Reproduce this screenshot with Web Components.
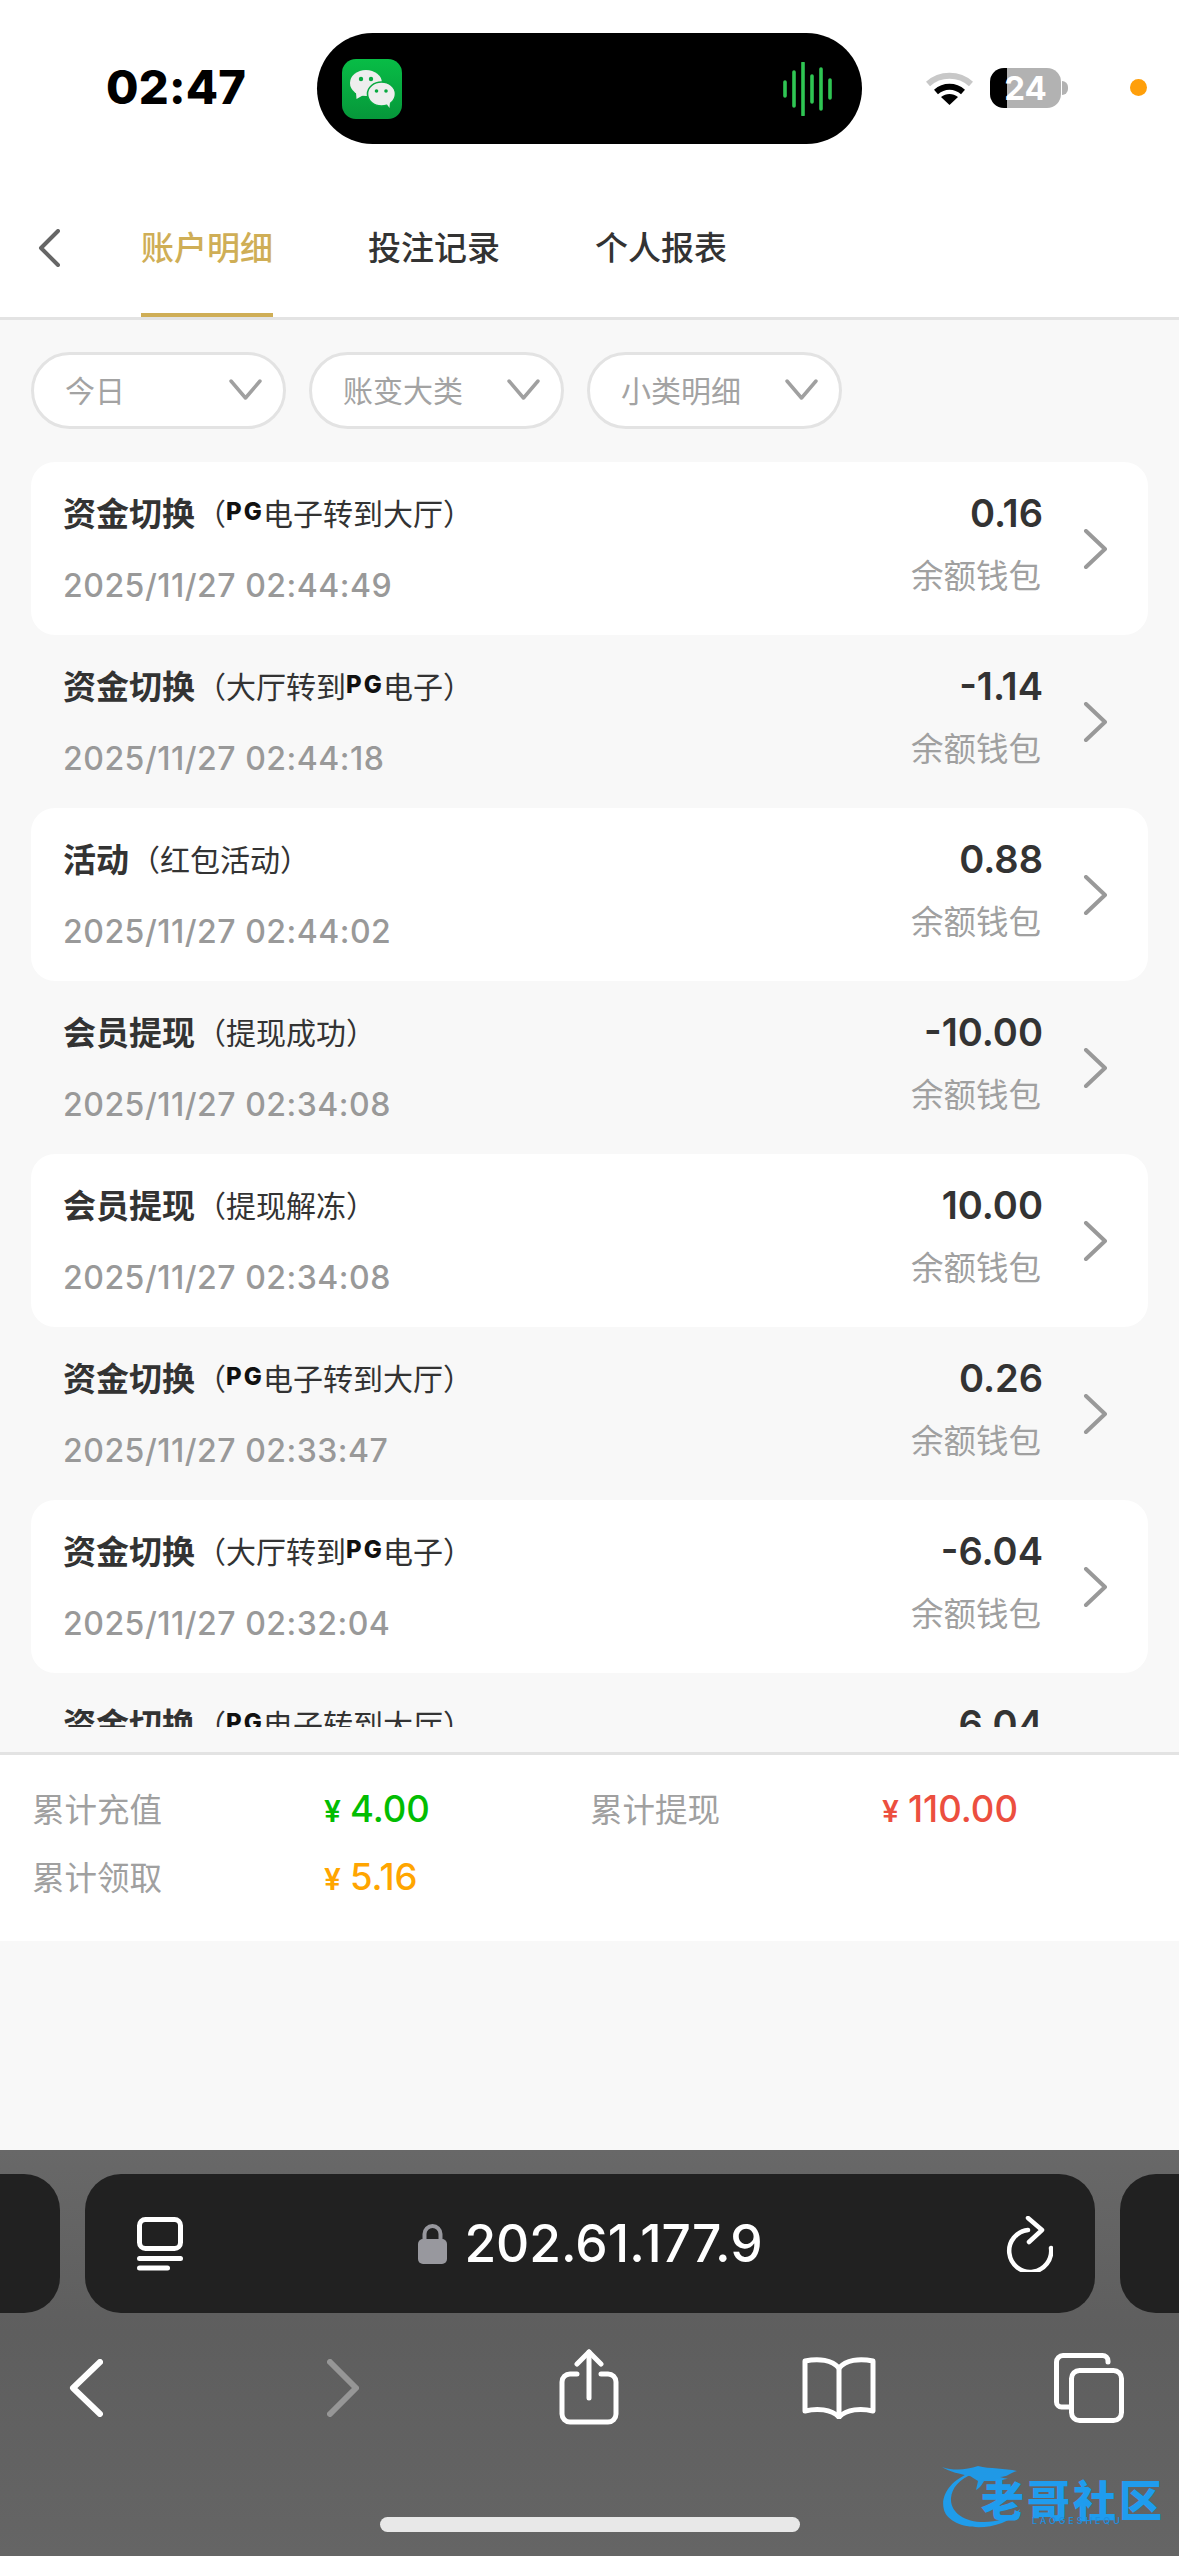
<!DOCTYPE html>
<html lang="zh">
<head>
<meta charset="utf-8">
<title>账户明细</title>
<style>
  html, body { margin: 0; padding: 0; }
  body {
    width: 1179px;
    height: 2556px;
    overflow: hidden;
    background: #f8f8f8;
    font-family: Inter, "Noto Sans CJK SC", sans-serif;
    color: #333;
  }
  #page { display: flex; flex-direction: column; height: 2556px; }
</style>
</head>
<body>
<div id="page">
  <status-bar time="02:47" battery="24"></status-bar>
  <tab-nav>
    <tab-item active>账户明细</tab-item>
    <tab-item>投注记录</tab-item>
    <tab-item>个人报表</tab-item>
  </tab-nav>
  <filter-bar>
    <filter-pill>今日</filter-pill>
    <filter-pill>账变大类</filter-pill>
    <filter-pill>小类明细</filter-pill>
  </filter-bar>
  <ledger-list>
    <ledger-row kind="资金切换" date="2025/11/27 02:44:49" amount="0.16" card>（<pg-mark></pg-mark>电子转到大厅）</ledger-row>
    <ledger-row kind="资金切换" date="2025/11/27 02:44:18" amount="-1.14">（大厅转到<pg-mark></pg-mark>电子）</ledger-row>
    <ledger-row kind="活动" date="2025/11/27 02:44:02" amount="0.88" card>（红包活动）</ledger-row>
    <ledger-row kind="会员提现" date="2025/11/27 02:34:08" amount="-10.00">（提现成功）</ledger-row>
    <ledger-row kind="会员提现" date="2025/11/27 02:34:08" amount="10.00" card>（提现解冻）</ledger-row>
    <ledger-row kind="资金切换" date="2025/11/27 02:33:47" amount="0.26">（<pg-mark></pg-mark>电子转到大厅）</ledger-row>
    <ledger-row kind="资金切换" date="2025/11/27 02:32:04" amount="-6.04" card>（大厅转到<pg-mark></pg-mark>电子）</ledger-row>
    <!-- last row runs under the fold, only its first line shows -->
    <ledger-row kind="资金切换" amount="6.04">（<pg-mark></pg-mark>电子转到大厅）</ledger-row>
  </ledger-list>
  <summary-panel>
    <summary-item label="累计充值" value="4.00" color="#02bd02"></summary-item>
    <summary-item label="累计提现" value="110.00" color="#ec4f3f"></summary-item>
    <summary-item label="累计领取" value="5.16" color="#ffa500"></summary-item>
  </summary-panel>
  <browser-bar url="202.61.177.9"></browser-bar>
</div>

<script>
class ShadowBase extends HTMLElement {
  render(html) {
    const template = document.createElement('template')
    template.innerHTML = html
    if (!this.shadowRoot) this.attachShadow({ mode: 'open' })
    this.shadowRoot.replaceChildren(template.content.cloneNode(true))
  }
}

class StatusBar extends ShadowBase {
  connectedCallback() {
    this.render(`
      <style>
        :host { display: flex; align-items: flex-start; height: 178px; background: #fff; flex: none; }
        .time { width: 142px; margin: 62px 0 0 106px; font: 800 47px/50px Inter, sans-serif; color: #000; letter-spacing: 0.2px; white-space: nowrap; }
        .island { display: flex; justify-content: space-between; align-items: center; box-sizing: border-box; width: 545px; height: 111px; margin: 33px 0 0 69px; padding: 0 30px 0 25px; background: #000; border-radius: 56px; }
        .wifi { margin: 70px 0 0 64px; }
        .battery { display: flex; align-items: center; justify-content: center; width: 71px; height: 40px; margin: 68px 0 0 17px; border-radius: 14px; overflow: hidden; background: linear-gradient(90deg, #000 17px, #b2b2b2 17px); font: 700 33px/40px Inter, sans-serif; color: #fff; }
        .nub { width: 6px; height: 14px; margin: 81px 0 0 1px; background: #b2b2b2; border-radius: 0 7px 7px 0; }
        .dot { width: 17px; height: 17px; margin: 79px 0 0 62px; border-radius: 50%; background: #ff9f0a; }
      </style>
      <div class="time">${this.getAttribute('time')}</div>
      <div class="island">
        <svg width="60" height="60" viewBox="0 0 60 60">
          <defs><linearGradient id="wx" x1="0" y1="0" x2="0" y2="1"><stop offset="0" stop-color="#08bd46"/><stop offset="1" stop-color="#06973a"/></linearGradient></defs>
          <rect width="60" height="60" rx="14" fill="url(#wx)"/>
          <ellipse cx="24" cy="24" rx="16" ry="13" fill="#eee"/>
          <path d="M14 33l0.5 7 7-4z" fill="#eee"/>
          <ellipse cx="39.500" cy="35" rx="14" ry="12" fill="#eee" stroke="#08a940" stroke-width="1.600"/>
          <path d="M44 44l3.500 5 .5-7z" fill="#eee"/>
          <circle cx="19" cy="20" r="2.200" fill="#08a940"/><circle cx="29" cy="20" r="2.200" fill="#08a940"/>
          <circle cx="34.500" cy="32" r="1.800" fill="#08a940"/><circle cx="44" cy="32" r="1.800" fill="#08a940"/>
        </svg>
        <svg width="50" height="54" viewBox="0 0 50 54" stroke="#2fc553" stroke-width="3.600" stroke-linecap="round">
          <path d="M3 20v14M12 10v34M21 1v52M30 14v26M39 7v40M48 18v18"/>
        </svg>
      </div>
      <svg class="wifi" width="47" height="35" viewBox="0 0 47 35" fill="none">
        <path d="M2 14C14 3 33 3 45 14" stroke="#c8c8c8" stroke-width="6"/>
        <path d="M10 22c8-7 19-7 27 0" stroke="#000" stroke-width="6"/>
        <path d="M23.500 35L15 27c5-4 12-4 17 0z" fill="#000"/>
      </svg>
      <div class="battery">${this.getAttribute('battery')}</div>
      <div class="nub"></div>
      <div class="dot"></div>
    `)
  }
}
customElements.define('status-bar', StatusBar)

class TabNav extends ShadowBase {
  connectedCallback() {
    this.render(`
      <style>
        :host { display: flex; align-items: stretch; height: 139px; background: #fff; border-bottom: 3px solid #e3e3e3; flex: none; }
        svg { align-self: center; margin: 0 81px 0 38px; }
        .tabs { display: flex; gap: 95px; }
      </style>
      <svg width="22" height="38" viewBox="0 0 22 38" fill="none" stroke="#666" stroke-width="4" stroke-linecap="round" stroke-linejoin="round"><path d="M20 2L3 19l17 17"/></svg>
      <div class="tabs"><slot></slot></div>
    `)
  }
}
customElements.define('tab-nav', TabNav)

class TabItem extends ShadowBase {
  connectedCallback() {
    this.render(`
      <style>
        :host { display: flex; align-items: center; box-sizing: border-box; border-bottom: 4px solid transparent; font-size: 33px; font-weight: 500; color: #333; white-space: nowrap; }
        :host([active]) { color: #cfae56; border-bottom-color: #cfae56; }
      </style>
      <slot></slot>
    `)
  }
}
customElements.define('tab-item', TabItem)

class FilterBar extends ShadowBase {
  connectedCallback() {
    this.render(`
      <style>
        :host { display: flex; gap: 23px; padding: 32px 31px 33px; flex: none; }
      </style>
      <slot></slot>
    `)
  }
}
customElements.define('filter-bar', FilterBar)

class FilterPill extends ShadowBase {
  connectedCallback() {
    this.render(`
      <style>
        :host { display: flex; align-items: center; justify-content: space-between; box-sizing: border-box; width: 255px; height: 77px; padding: 0 21px 3px 31px; background: #fff; border: 3px solid #e3e3e3; border-radius: 39px; font-size: 30px; color: #a3a3a3; }
      </style>
      <slot></slot>
      <svg width="33" height="21" viewBox="0 0 33 21" fill="none" stroke="#a0a0a0" stroke-width="3.500" stroke-linecap="round" stroke-linejoin="round"><path d="M2 2l14.500 17L31 2"/></svg>
    `)
  }
}
customElements.define('filter-pill', FilterPill)

class LedgerList extends ShadowBase {
  connectedCallback() {
    this.render(`
      <style>
        :host { display: block; flex: none; margin: 0 31px 25px; height: 1265px; overflow: hidden; }
      </style>
      <slot></slot>
    `)
  }
}
customElements.define('ledger-list', LedgerList)

class LedgerRow extends ShadowBase {
  connectedCallback() {
    const date = this.getAttribute('date')
    this.render(`
      <style>
        :host { display: flex; box-sizing: border-box; height: 173px; padding: 28px 40px 0 32px; border-radius: 24px; }
        :host([card]) { background: #fff; }
        .main { flex: 1; }
        .head { display: flex; align-items: center; height: 44px; font-size: 30px; color: #333; white-space: nowrap; }
        .kind { font-size: 33px; font-weight: 700; margin-right: 1px; }
        .date { margin-top: 29px; font: 500 32px/46px Inter, sans-serif; letter-spacing: 0.5px; color: #999; white-space: nowrap; }
        .side { text-align: right; }
        .amount { margin-right: -2px; font: 600 38px/46px Inter, sans-serif; color: #333; }
        .wallet { margin-top: 18px; font-size: 32.500px; line-height: 46px; color: #a0a0a0; }
        svg { margin: 39px 0 0 42px; flex: none; }
      </style>
      <div class="main">
        <div class="head"><span class="kind">${this.getAttribute('kind')}</span><slot></slot></div>
        ${date ? `<div class="date">${date}</div>` : ''}
      </div>
      <div class="side">
        <div class="amount">${this.getAttribute('amount')}</div>
        ${date ? '<div class="wallet">余额钱包</div>' : ''}
      </div>
      <svg width="25" height="40" viewBox="0 0 25 40" fill="none" stroke="#999" stroke-width="4" stroke-linecap="round" stroke-linejoin="round"><path d="M3 2l19 18L3 38"/></svg>
    `)
  }
}
customElements.define('ledger-row', LedgerRow)

class PgMark extends ShadowBase {
  connectedCallback() {
    this.render(`
      <style>
        :host { display: inline-block; width: 37px; font: 800 24px/24px Inter, sans-serif; letter-spacing: 2px; color: #111; }
      </style>PG`)
  }
}
customElements.define('pg-mark', PgMark)

class SummaryPanel extends ShadowBase {
  connectedCallback() {
    this.render(`
      <style>
        :host { display: grid; grid-template-columns: 558px 1fr; grid-auto-rows: 68px; align-content: start; box-sizing: border-box; height: 189px; padding: 20px 0 0 32px; background: #fff; border-top: 3px solid #e3e3e3; flex: none; }
      </style>
      <slot></slot>
    `)
  }
}
customElements.define('summary-panel', SummaryPanel)

class SummaryItem extends ShadowBase {
  connectedCallback() {
    const color = this.getAttribute('color')
    this.render(`
      <style>
        :host { display: flex; align-items: center; }
        .label { width: 292px; margin-bottom: 3px; font-size: 32.500px; color: #a0a0a0; }
        .value { display: flex; align-items: baseline; font: 500 36.500px/1 Inter, sans-serif; color: ${color}; }
        .yen { font-size: 30px; margin-right: 9px; font-weight: 600; }
      </style>
      <span class="label">${this.getAttribute('label')}</span>
      <span class="value"><span class="yen">¥</span>${this.getAttribute('value')}</span>
    `)
  }
}
customElements.define('summary-item', SummaryItem)

class BrowserBar extends ShadowBase {
  connectedCallback() {
    this.render(`
      <style>
        :host { position: relative; display: block; flex: none; height: 406px; margin-top: 209px; padding-top: 24px; box-sizing: border-box; background: linear-gradient(#686868, #5e5e5e 45%, #656565); color: #fff; }
        .pills { display: flex; gap: 25px; height: 139px; }
        .side { flex: 0 0 60px; background: #212121; border-radius: 0 36px 36px 0; }
        .side.right { flex-basis: 59px; border-radius: 36px 0 0 36px; }
        .url { flex: 1; display: flex; align-items: center; justify-content: space-between; padding: 0 42px 0 52px; background: #212121; border-radius: 36px; }
        .addr { display: flex; align-items: center; gap: 17px; font: 500 51.500px/1 Inter, sans-serif; margin-left: -8px; }
        .tools { display: flex; align-items: flex-start; height: 110px; padding: 36px 0 0 69px; }
        .tools svg { flex: none; fill: none; stroke: #fff; stroke-linecap: round; stroke-linejoin: round; }
        .home { width: 420px; height: 15px; margin: 58px auto 0; background: #e8e8e8; border-radius: 8px; }
        .mark { position: absolute; left: 942px; top: 312px; width: 222px; height: 68px; }
        .mark svg { position: absolute; left: 0; top: 0; }
        .mark b { position: absolute; left: 39px; top: 19px; font: 900 43px/34px "Noto Sans CJK SC", sans-serif; letter-spacing: 3px; white-space: nowrap; color: #1f9cee; }
        .mark i { position: absolute; left: 90px; top: 54px; font: 500 9px/9px Inter, sans-serif; font-style: normal; letter-spacing: 2.900px; color: #1d8fe0; white-space: nowrap; }
      </style>
      <div class="pills">
        <div class="side"></div>
        <div class="url">
          <svg width="46" height="54" viewBox="0 0 46 54" fill="none" stroke="#fff" stroke-linecap="round">
            <rect x="2.500" y="2.500" width="41" height="29" rx="6" stroke-width="5"/>
            <path d="M2.500 41.500h41" stroke-width="5"/>
            <path d="M2.500 51h28" stroke-width="5"/>
          </svg>
          <div class="addr">
            <svg width="29" height="40" viewBox="0 0 29 40"><path d="M6.500 17v-7a8 8 0 0 1 16 0v7" fill="none" stroke="#98989e" stroke-width="4"/><rect y="15" width="29" height="25" rx="5" fill="#98989e"/></svg>
            <span>${this.getAttribute('url')}</span>
          </div>
          <svg width="47" height="56" viewBox="0 0 47 56" fill="none" stroke="#fff" stroke-width="4.500" stroke-linecap="round" stroke-linejoin="round">
            <path d="M22 14A21 21 0 1 0 45 32"/>
            <path d="M22 2l14 12-13 12"/>
          </svg>
        </div>
        <div class="side right"></div>
      </div>
      <div class="tools">
        <svg width="34" height="58" viewBox="0 0 34 58" stroke-width="6" style="margin-top:10px"><path d="M31 3L4 29l27 26"/></svg>
        <svg width="32" height="58" viewBox="0 0 32 58" stroke-width="6" style="margin:10px 0 0 224px;stroke:#969696"><path d="M3 3l26 26L3 55"/></svg>
        <svg width="60" height="76" viewBox="0 0 60 76" stroke-width="5" style="margin-left:200px"><path d="M18 25H11a8 8 0 0 0-8 8v32a8 8 0 0 0 8 8h38a8 8 0 0 0 8-8V33a8 8 0 0 0-8-8h-7"/><path d="M30 49V3"/><path d="M18 15L30 3l12 12"/></svg>
        <svg width="74" height="62" viewBox="0 0 74 62" stroke-width="5" style="margin:8px 0 0 183px"><path d="M37 11C30 3 17 1 3 4v50c12-3 26-2 34 6 8-8 22-9 34-6V4C57 1 44 3 37 11z"/><path d="M37 11v49"/></svg>
        <svg width="70" height="70" viewBox="0 0 70 70" stroke-width="5" style="margin:4px 0 0 178px"><path d="M54 9V8a5.500 5.500 0 0 0-5.500-5.500H9A6.500 6.500 0 0 0 2.500 9v40a5 5 0 0 0 5 5H15"/><rect x="17.500" y="17.500" width="50" height="50" rx="8"/></svg>
      </div>
      <div class="home"></div>
      <div class="mark">
        <svg width="222" height="68" viewBox="0 0 222 68">
          <path d="M30 10C8 18-2 34 2 48c5 16 34 22 58 13 10-4 16-8 18-14-10 9-22 13-36 13C22 60 8 50 9 36c1-10 8-19 22-24z" fill="#1f9cea"/>
          <path d="M0 5c12 4 24 3 36-1 12 3 27 2 39 5-7 2-10 6-17 6 4 1 6 2 8 1-7 4-19 3-24 3-2 3-3 6-8 9l2-9-8-5C18 12 8 10 0 5z" fill="#2099e6"/>
        </svg>
        <b>老哥社区</b>
        <i>LAOGESHEQU</i>
      </div>
    `)
  }
}
customElements.define('browser-bar', BrowserBar)
</script>
</body>
</html>
